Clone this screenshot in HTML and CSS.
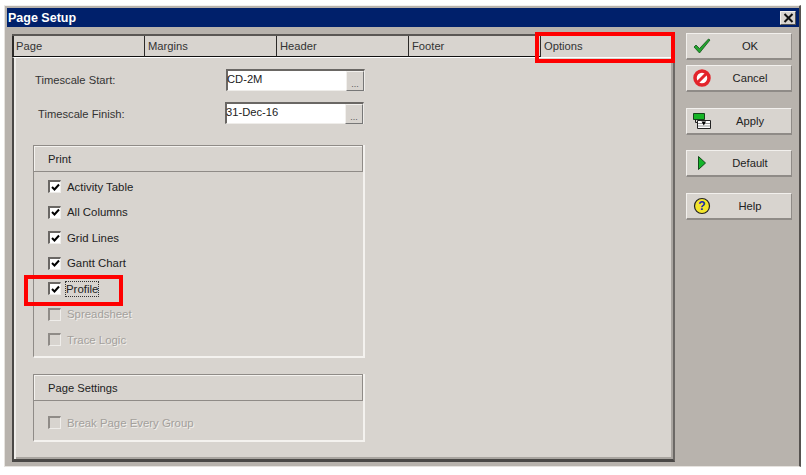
FILE: index.html
```html
<!DOCTYPE html>
<html lang="en">
<head>
<meta charset="utf-8">
<title>Page Setup</title>
<link rel="stylesheet" href="styles.css">
</head>
<body>
<div class="window">
  <div class="titlebar">
    <span class="title">Page Setup</span>
    <span class="close"><svg width="11" height="10" viewBox="0 0 11 10"><path d="M1.500 1 9.500 9M9.500 1 1.500 9" stroke="#111" stroke-width="2" fill="none"/></svg></span>
  </div>
  <div class="content">
    <div class="main">
      <div class="tabs">
        <div class="tab">Page</div>
        <div class="tab">Margins</div>
        <div class="tab">Header</div>
        <div class="tab">Footer</div>
        <div class="tab tab-active">Options<span class="mark mark-options"></span></div>
      </div>
      <div class="panel">
        <div class="field field-start">
          <label class="field-label">Timescale Start:</label>
          <div class="input"><span class="input-text">CD-2M</span><span class="dots">...</span></div>
        </div>
        <div class="field field-finish">
          <label class="field-label">Timescale Finish:</label>
          <div class="input"><span class="input-text">31-Dec-16</span><span class="dots">...</span></div>
        </div>
        <section class="group group-print">
          <div class="group-head">Print</div>
          <div class="group-body">
            <div class="check"><span class="box"><svg width="9" height="9" viewBox="0 0 9 9"><path d="M1 4 3.500 6.500 8 1.500" stroke="#000" stroke-width="2" fill="none"/></svg></span>Activity Table</div>
            <div class="check"><span class="box"><svg width="9" height="9" viewBox="0 0 9 9"><path d="M1 4 3.500 6.500 8 1.500" stroke="#000" stroke-width="2" fill="none"/></svg></span>All Columns</div>
            <div class="check"><span class="box"><svg width="9" height="9" viewBox="0 0 9 9"><path d="M1 4 3.500 6.500 8 1.500" stroke="#000" stroke-width="2" fill="none"/></svg></span>Grid Lines</div>
            <div class="check"><span class="box"><svg width="9" height="9" viewBox="0 0 9 9"><path d="M1 4 3.500 6.500 8 1.500" stroke="#000" stroke-width="2" fill="none"/></svg></span>Gantt Chart</div>
            <div class="check check-focus"><span class="box"><svg width="9" height="9" viewBox="0 0 9 9"><path d="M1 4 3.500 6.500 8 1.500" stroke="#000" stroke-width="2" fill="none"/></svg></span><span class="focus">Profile</span><span class="mark mark-profile"></span></div>
            <div class="check disabled"><span class="box"></span>Spreadsheet</div>
            <div class="check disabled"><span class="box"></span>Trace Logic</div>
          </div>
        </section>
        <section class="group group-settings">
          <div class="group-head">Page Settings</div>
          <div class="group-body">
            <div class="check disabled"><span class="box"></span>Break Page Every Group</div>
          </div>
        </section>
      </div>
    </div>
    <div class="side">
      <button class="btn btn-ok"><span class="btn-icon"><svg width="18" height="16" viewBox="0 0 18 16"><path d="M1 9 3 7 6.500 10.500 15.500 1 17 2 6.500 15Z" fill="#22a52e" stroke="#14531a" stroke-width=".8"/></svg></span><span class="btn-text">OK</span></button>
      <button class="btn btn-cancel"><span class="btn-icon"><svg width="18" height="18" viewBox="0 0 18 18"><circle cx="9" cy="9" r="7" fill="#fff" stroke="#e3242b" stroke-width="3.500"/><path d="M4.500 13.500 13.500 4.500" stroke="#e3242b" stroke-width="3"/></svg></span><span class="btn-text">Cancel</span></button>
      <button class="btn btn-apply"><span class="btn-icon"><svg width="18" height="16" viewBox="0 0 18 16"><path d="M4.500 7.500H17.500V15.500H4.500Z" fill="#fff" stroke="#222"/><path d="M5 10.500H17M5 13H17" stroke="#999"/><path d="M.5 .5H11.500V6.500H.5Z" fill="#16b526" stroke="#14451a"/><path d="M2.500 6.500V9.500H5" fill="none" stroke="#222"/><path d="M8.500 8.500H13L10.750 12.500Z" fill="#000"/></svg></span><span class="btn-text">Apply</span></button>
      <button class="btn btn-default"><span class="btn-icon"><svg width="10" height="16" viewBox="0 0 10 16"><path d="M1.500 1.500 8.500 8 1.500 14.500Z" fill="#14b52a" stroke="#14491b"/></svg></span><span class="btn-text">Default</span></button>
      <button class="btn btn-help"><span class="btn-icon"><svg width="18" height="18" viewBox="0 0 18 18"><circle cx="9" cy="9" r="7.500" fill="#f3e52b" stroke="#222" stroke-width="1.200"/><text x="9" y="13" text-anchor="middle" class="help-glyph">?</text></svg></span><span class="btn-text">Help</span></button>
    </div>
  </div>
</div>
</body>
</html>
```

FILE: styles.css
```css
* { box-sizing: border-box; }
html, body { margin: 0; padding: 0; background: #fff; }
body {
  width: 806px;
  height: 475px;
  padding: 5px 5px 8px 4px;
  font-family: "Liberation Sans", Arial, sans-serif;
  font-size: 11px;
  color: #1c1c1c;
  overflow: hidden;
}
.window {
  height: 462px;
  display: flex;
  flex-direction: column;
  background: #b8b3ad;
  border: 1px solid #e6e3df;
  border-top-color: #f1efec;
  border-right: 2px solid #55524f;
  padding: 2px 0 0 2px;
}
.titlebar {
  height: 19px;
  flex: none;
  background: #00206b;
  display: flex;
  align-items: center;
  justify-content: space-between;
  padding: 0 3px 0 1px;
}
.title { color: #fff; font-weight: bold; font-size: 12.500px; }
.close {
  width: 16px;
  height: 14px;
  background: #d8d4cf;
  border: 1px solid #f2f0ed;
  border-right-color: #555;
  border-bottom-color: #555;
  display: flex;
  align-items: center;
  justify-content: center;
}
.content {
  flex: 1;
  display: flex;
  padding: 7px 7px 4px 5px;
  min-height: 0;
}
.main { width: 663px; display: flex; flex-direction: column; }
.tabs {
  position: relative;
  height: 23px;
  flex: none;
  display: flex;
  background: #d8d4cf;
  border-top: 2px solid #5a5754;
}
.tab {
  position: relative;
  width: 132px;
  height: 21px;
  padding: 4px 0 0 3px;
  border-left: 1px solid #2c2a28;
  border-bottom: 1px solid #111;
  font-size: 11.200px;
  color: #333;
}
.tab:first-child { border-left-width: 2px; padding-left: 2px; }
.tab-active {
  flex: 1;
  border-bottom: none;
  padding-left: 3px;
}
.panel {
  flex: 1;
  background: #d8d4cf;
  border-left: 2px solid #4a4846;
  border-top: 1px solid #fff;
  border-right: 2px solid #6b6865;
  border-bottom: 3px solid #4a4846;
  box-shadow: inset 2px 0 0 #efedea, inset -2px -2px 0 #a9a5a0;
  padding: 11px 0 0 19px;
}
.field { display: flex; align-items: center; height: 22px; }
.field-start { padding-left: 2px; }
.field-finish { margin-top: 11px; padding-left: 5px; }
.field-label { width: 191px; font-size: 11.200px; color: #333; }
.field-finish .field-label { width: 187px; padding-top: 1px; }
.input {
  width: 139px;
  height: 22px;
  display: flex;
  justify-content: space-between;
  background: #fff;
  border: 2px solid #6a6764;
  border-right: 1px solid #efedea;
  border-bottom: 1px solid #efedea;
}
.input-text { font-size: 11.200px; padding-top: 2px; margin-left: -1px; color: #222; }
.dots {
  width: 18px;
  margin: 0 0 -1px;
  background: #d8d4cf;
  border: 1px solid #f2f0ed;
  border-right-color: #777;
  border-bottom-color: #777;
  text-align: center;
  line-height: 24px;
  font-size: 9px;
  color: #555;
}
.group {
  width: 332px;
  border-left: 1px solid #8f8b87;
  border-right: 2px solid #f4f2ef;
  border-bottom: 2px solid #f4f2ef;
}
.group-print { margin-top: 21px; height: 213px; }
.group-settings { margin-top: 16px; height: 68px; }
.group-head {
  height: 27px;
  border: 1px solid #8f8b87;
  border-left: none;
  box-shadow: inset 0 1px 0 #f4f2ef, inset 1px 0 0 #f4f2ef;
  padding: 7px 0 0 14px;
  font-size: 11.200px;
  color: #222;
}
.group-print .group-body { padding-top: 2px; }
.group-settings .group-body { padding-top: 9px; }
.check {
  position: relative;
  display: flex;
  align-items: center;
  height: 25.500px;
  padding-left: 14px;
  font-size: 11.400px;
  color: #222;
}
.box {
  width: 13px;
  height: 13px;
  margin-right: 6px;
  flex: none;
  background: #fff;
  border: 2px solid #6a6764;
  border-right: 1px solid #efedea;
  border-bottom: 1px solid #efedea;
  display: flex;
  align-items: center;
  justify-content: center;
}
.check.disabled { color: #a3a09c; text-shadow: 1px 1px 0 #f2f0ed; }
.disabled .box { background: #d8d4cf; border-color: #8f8b87 #efedea #efedea #8f8b87; }
.focus { outline: 1px dotted #333; padding: 1px 0; margin-left: -1px; }
.mark { position: absolute; border: 4px solid #ff0000; pointer-events: none; }
.mark-options { left: -6px; top: -4px; width: 140px; height: 31px; z-index: 2; }
.mark-profile { left: -10px; top: -1px; width: 99px; height: 31px; }
.side {
  margin: -1px 0 0 11px;
  display: flex;
  flex-direction: column;
  width: 106px;
}
.btn {
  width: 106px;
  height: 27px;
  flex: none;
  display: flex;
  align-items: center;
  padding: 0;
  background: #d8d4cf;
  border: 1px solid #f2f0ed;
  border-right-color: #8f8b87;
  border-bottom: 2px solid #8f8b87;
  font-family: inherit;
  font-size: 11.200px;
  color: #222;
}
.btn-icon { width: 30px; display: flex; justify-content: center; flex: none; }
.btn-text { width: 64px; margin-left: 1px; text-align: center; }
.btn-cancel { margin-top: 5px; }
.btn-apply { margin-top: 16px; }
.btn-default { margin-top: 15px; }
.btn-help { margin-top: 16px; }
.help-glyph { font-family: "Liberation Sans", Arial, sans-serif; font-weight: bold; font-size: 12px; fill: #1428b4; }
```
